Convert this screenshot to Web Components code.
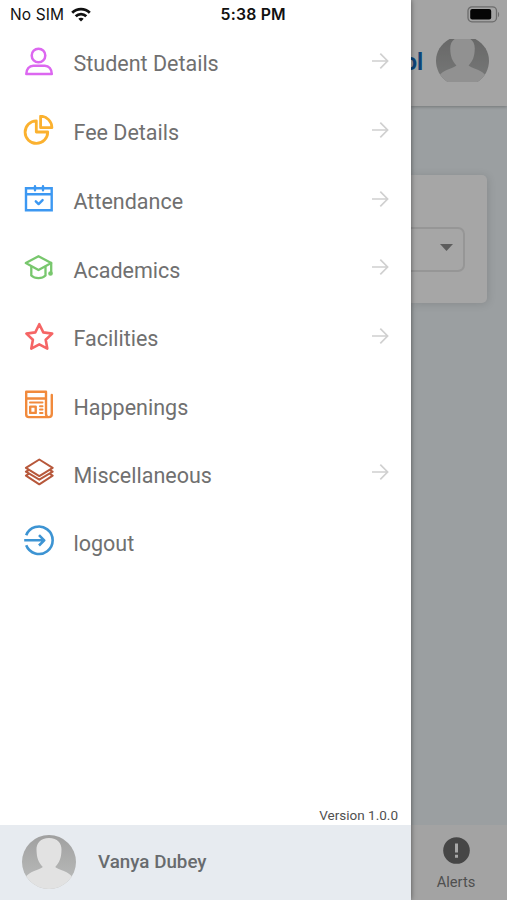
<!DOCTYPE html>
<html lang="en">
<head>
<meta charset="utf-8">
<title>School menu</title>
<style>
html,body{margin:0;height:100%;overflow:hidden;background:#fff;font-family:Roboto,sans-serif}
</style>
</head>
<body>
<school-app></school-app>
<script>
const define = (name, html) => customElements.define(name, class extends HTMLElement {
  connectedCallback() {
    if (this.shadowRoot) return;
    const root = this.attachShadow({ mode: 'open' });
    root.innerHTML = typeof html === 'function' ? html(this) : html;
  }
});

const stroke = (color, width, body) =>
  `<svg viewBox="0 0 32 32" fill="none" stroke="${color}" stroke-width="${width}" stroke-linejoin="round" stroke-linecap="round">${body}</svg>`;

const icons = {
  student: stroke('#dc67f0', 2.5, '<circle cx="15.500" cy="9.500" r="6.800"/><path d="M3.300 28h25.500c0-5-3-8.300-7-8.300H10.300c-4 0-7 3.300-7 8.300z"/>'),
  fee: stroke('#fbb12f', 2.8, '<path d="M13.300 5.800A11.300 11.300 0 1 0 24.700 17H13.300z"/><path d="M17.600 1.200V12.700H28.900A11.500 11.500 0 0 0 17.600 1.200z"/>'),
  attendance: stroke('#3c98f2', 2.4, '<path d="M3 4.200h25.700v22H3zM3 10.200h25.700M12 2.200v4M20 2.200v4" stroke-linejoin="miter"/><path d="M12.800 17.300l2.800 2.800 4-4" stroke-width="2.400"/>'),
  academics: stroke('#78c76d', 2.3, '<path d="M2.800 11L15.500 4.200 28.200 11 15.500 18z"/><path d="M8.300 15v8.500c3.600 3.600 10.800 3.600 14.200 0V15M28.200 11v10"/><circle cx="27.500" cy="21.500" r="1.200" fill="#78c76d"/>'),
  facilities: stroke('#f56565', 2.6, '<path d="M16.300 3.200l4 8.200 8.900 1.200-6.500 6.200 1.600 8.800-8-4.200-8 4.200 1.600-8.800-6.500-6.200 8.900-1.200z"/>'),
  happenings: stroke('#f18a3c', 2.4, '<path d="M23 2.800H3.200v22.700c0 1.700.8 2.600 2.600 2.600h19.800c2.200 0 3.200-1.200 3.200-3.400V6M23 2.800v22c0 2 .6 2.800 1.900 3.300M3.200 9.500H23"/><path d="M7 13.500h12.500" stroke-width="2"/><path d="M7.200 17.600h5.500v6.300H7.200z"/><path d="M17 17.300h2.500M17 20.600h2.500M17 24h2.500" stroke-width="2"/>'),
  misc: stroke('#b7583b', 2, '<path d="M16.300 2.500l13.400 8.300-13.400 8.300-13.400-8.300z"/><path d="M5.300 13.400l-2.400 1.300 13.400 8 13.400-8-2.400-1.300M5.300 17.200l-2.400 1.400 13.400 8.700 13.400-8.700-2.400-1.400"/>'),
  logout: stroke('#3d94d3', 2.6, '<path d="M3.200 10.300A13.700 13.700 0 1 1 3.200 20.300M1.200 15.300h20M16 10.100l5.200 5.200-5.200 5.200" stroke-linecap="butt"/>')
};

define('menu-icon', el => `
<style>:host{display:block;width:32px;height:32px}svg{display:block;width:100%;height:100%}</style>
${icons[el.getAttribute('name')]}`);

define('menu-item', el => `
<style>
:host{display:grid;grid-template-columns:50.500px 1fr 18px;align-items:center;height:68px;padding:0 22px 0 23px;box-sizing:border-box;color:#707070}
:host([tall]){height:69px}
menu-icon{margin-bottom:5px}
span{font-size:21.500px;line-height:28px;white-space:nowrap;margin-top:1px}
:host([tall]) span{margin-top:0}
.arrow{width:18px;height:18px;margin-bottom:7px}
</style>
<menu-icon name="${el.getAttribute('icon')}"></menu-icon>
<span><slot></slot></span>
${el.hasAttribute('more') ? '<svg class="arrow" viewBox="0 0 18 18" fill="none" stroke="#d0d0d0" stroke-width="1.700"><path d="M1 9h15.500M9.300 1.700L16.600 9l-7.300 7.300"/></svg>' : ''}`);

define('user-avatar', el => {
  const cropped = el.hasAttribute('cropped');
  const clip = cropped ? '<path d="M14 5h26C49 10 54 18 54 27s-4 17-12 22H12C4 44 0 36 0 27S5 10 14 5z"/>' : '<circle cx="27" cy="27" r="27"/>';
  return `
<style>:host{display:block;width:54px;height:54px}svg{display:block;width:100%;height:100%}</style>
<svg viewBox="0 0 54 54">
<defs><clipPath id="c">${clip}</clipPath>
<linearGradient id="g" x1="0" y1="0" x2="0" y2="1"><stop stop-color="#a0a0a0"/><stop offset="1" stop-color="#bcbebd"/></linearGradient></defs>
<g clip-path="url(#c)"><rect width="54" height="54" fill="url(#g)"/>
<path fill="#e2e2e2" d="M27 3c8.500 0 12.700 5 12.500 12-.2 8-2 12.500-6.300 17 3 3 14 4 18.300 11.500L45 54H9L2.500 43.500C6.800 36 17.800 35 20.800 32 16.500 27.500 14.700 23 14.500 15 14.300 8 18.500 3 27 3z"/></g>
</svg>`;
});

define('status-bar', `
<style>
:host{display:flex;align-items:center;height:29px;padding-left:10px;box-sizing:border-box;color:#111;font-family:Inter,sans-serif;font-size:15.500px}
svg{width:20px;height:15px;margin-left:7px}
b{font-weight:600;margin-left:129.500px;white-space:nowrap;font-size:15.800px;letter-spacing:.2px}
.net{letter-spacing:.1px;white-space:nowrap}
</style>
<span class="net">No SIM</span>
<svg viewBox="0 0 20 15" fill="none" stroke="#111" stroke-width="2.800"><path d="M1.200 5.700c5-4.800 12.600-4.800 17.600 0M4.700 9.300c3-2.900 7.600-2.900 10.600 0"/><path d="M10 14.500l-2.700-2.700c1.500-1.400 3.900-1.400 5.400 0z" fill="#111" stroke="none"/></svg>
<b>5:38 PM</b>`);

define('side-drawer', `
<style>
:host{display:flex;flex-direction:column;height:900px;background:#fff;box-shadow:0 0 5px rgba(0,0,0,.5);z-index:1}
nav{padding-top:.5px;flex:1}
.version{padding:0 13px 0 0;text-align:right;font-size:13.500px;line-height:20px;color:#505050}
footer{display:flex;align-items:center;gap:22px;height:75px;padding:0 0 1px 22px;box-sizing:border-box;background:#e7ebf0;color:#686b6e;font-size:18.800px;font-weight:500}
footer span{margin-bottom:1px}
</style>
<status-bar></status-bar>
<nav>
<menu-item icon="student" more tall>Student Details</menu-item>
<menu-item icon="fee" more tall>Fee Details</menu-item>
<menu-item icon="attendance" more tall>Attendance</menu-item>
<menu-item icon="academics" more>Academics</menu-item>
<menu-item icon="facilities" more tall>Facilities</menu-item>
<menu-item icon="happenings">Happenings</menu-item>
<menu-item icon="misc" more>Miscellaneous</menu-item>
<menu-item icon="logout">logout</menu-item>
</nav>
<div class="version">Version 1.0.0</div>
<footer><user-avatar></user-avatar><span>Vanya Dubey</span></footer>`);

define('dimmed-page', `
<style>
:host{display:flex;flex-direction:column;height:900px;background:#9b9fa1}
header{height:106px;box-sizing:border-box;background:#a4a4a4;box-shadow:0 1px 3px rgba(0,0,0,.25)}
.battery{display:flex;justify-content:flex-end;padding:6px 7px 0 0}
.battery svg{width:33px;height:17px}
.brand{display:flex;align-items:center;justify-content:space-between;padding-right:18px;height:54px;margin-top:10px}
.brand span{display:flex;justify-content:flex-end;width:12px;color:#0c4478;font-size:23px;font-weight:700;line-height:30px;margin-top:6px}
.brand user-avatar{width:53px;height:53px;filter:brightness(.64)}
.card{width:76px;height:128px;margin-top:69px;box-sizing:border-box;padding-top:52px;background:#a6a6a6;border-radius:0 5px 5px 0;box-shadow:1px 1px 8px rgba(0,0,0,.13)}
.select{width:54px;height:45px;box-sizing:border-box;border:2px solid #969696;border-left:0;border-radius:0 7px 7px 0;display:flex;align-items:center;justify-content:flex-end;padding:0 10px 5px 0}
.select svg{width:13px;height:7px}
.tab{margin-top:auto;height:75px;background:#a3a3a3;display:flex;flex-direction:column;align-items:center;box-sizing:border-box;padding:12px 6px 0 0;font-size:14.700px;color:#4f4f4f}
.tab svg{width:27px;height:27px;margin-bottom:9px}
</style>
<header>
<div class="battery"><svg viewBox="0 0 33 17"><rect x="1" y=".8" width="28.500" height="15" rx="4" fill="none" stroke="#6c6c6c" stroke-width="1.300"/><rect x="3.200" y="3" width="21" height="10.600" rx="2" fill="#050505"/><path d="M31 6v5c1.500-.5 1.500-4.500 0-5z" fill="#6c6c6c"/></svg></div>
<div class="brand"><span>ol</span><user-avatar cropped></user-avatar></div>
</header>
<div class="card"><div class="select"><svg viewBox="0 0 13 7"><path d="M0 0h13L6.500 7z" fill="#5d5d5d"/></svg></div></div>
<div class="tab"><svg viewBox="0 0 27 27"><circle cx="13.500" cy="13.500" r="13.300" fill="#464646"/><path d="M12 6.500h3v9h-3zM12 17.800h3v3h-3z" fill="#a8a8a8"/></svg>Alerts</div>`);

define('school-app', `
<style>:host{display:grid;grid-template-columns:411px 96px;width:507px;height:900px;overflow:hidden}</style>
<side-drawer></side-drawer><dimmed-page></dimmed-page>`);
</script>
</body>
</html>
